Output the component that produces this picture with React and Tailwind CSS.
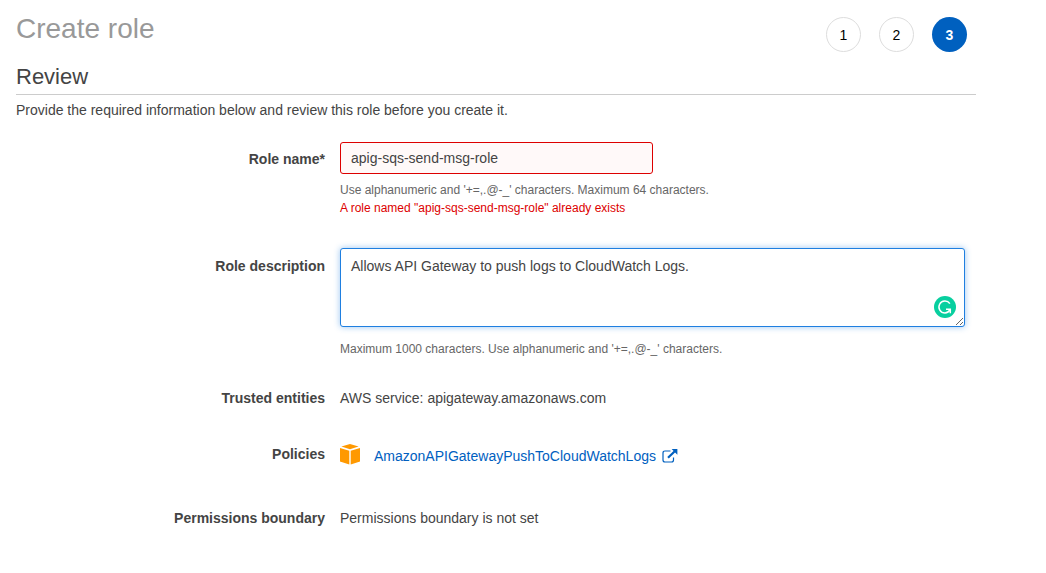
import React from "react";

const steps = [1, 2, 3];
const current = 3;

function Row({ label, htmlFor, labelClass = "", className = "", children }) {
  const text = "text-right text-sm leading-5 font-bold text-[#444444] " + labelClass;
  return (
    <div className={"grid grid-cols-[minmax(0,309fr)_minmax(0,636fr)] gap-[15px] " + className}>
      {htmlFor ? (
        <label htmlFor={htmlFor} className={text}>{label}</label>
      ) : (
        <div className={text}>{label}</div>
      )}
      <div className="min-w-0">{children}</div>
    </div>
  );
}

function PolicyIcon() {
  return (
    <svg aria-hidden="true" width="20" height="21" viewBox="0 0 20 21" fill="#ff9900" className="shrink-0">
      <path d="M10 0 L18.6 2.6 L10 5.2 L1.4 2.6 Z" />
      <path d="M0 4 L9.3 6.7 V20.4 L0 17.6 Z" />
      <path d="M20 4 L10.7 6.7 V20.4 L20 17.6 Z" />
    </svg>
  );
}

function ExternalIcon() {
  return (
    <svg aria-hidden="true" width="16" height="14" viewBox="0 0 16 14" fill="none" stroke="#0060bf" className="shrink-0">
      <path d="M8.5 2 H3 Q1 2 1 4 V11 Q1 13 3 13 H9.5 Q11.5 13 11.5 11 V8.4" strokeWidth="1.2" />
      <path d="M6 8.8 L12.8 2.2" strokeWidth="2.2" />
      <path d="M9.6 0 H15.4 V5.8 Z" fill="#0060bf" stroke="none" />
    </svg>
  );
}

function GrammarBadge() {
  return (
    <svg aria-hidden="true" width="22" height="22" viewBox="0 0 22 22" className="absolute right-[9px] bottom-[9px]">
      <circle cx="11" cy="11" r="11" fill="#08cf9f" />
      <path d="M15.9 7.6 A6 6 0 1 0 11 17 Q14.4 16.9 16 13.6" fill="none" stroke="#fff" strokeWidth="1.5" />
      <path d="M12 13.2 H16.3 V17.2" fill="none" stroke="#fff" strokeWidth="1.5" />
    </svg>
  );
}

export default function App() {
  return (
    <main className="min-h-screen bg-white font-['Liberation_Sans',Arial,sans-serif] text-[#444444]">
      <div className="max-w-[992px] px-4 pt-3 pb-8">
        <header className="flex items-start justify-between">
          <h1 className="text-[28px] leading-[34px] text-[#999999]">Create role</h1>
          <ol className="mt-[5px] mr-[9px] flex gap-[18px]">
            {steps.map((n) => (
              <li
                key={n}
                aria-current={n === current ? "step" : undefined}
                className={
                  "flex size-[35px] items-center justify-center rounded-full text-sm " +
                  (n === current ? "bg-[#0060bf] font-bold text-white" : "border border-[#dddddd] text-black")
                }
              >
                {n}
              </li>
            ))}
          </ol>
        </header>

        <h2 className="mt-3 border-b border-[#cccccc] pb-1 text-[22px] leading-[26px]">Review</h2>
        <p className="mt-[5px] text-sm leading-5">
          Provide the required information below and review this role before you create it.
        </p>

        <form className="mt-[22px]" onSubmit={(e) => e.preventDefault()}>
          <Row label="Role name*" htmlFor="role-name" labelClass="pt-[7px]">
            <input
              id="role-name"
              type="text"
              aria-invalid="true"
              aria-describedby="name-help name-error"
              defaultValue="apig-sqs-send-msg-role"
              className="block h-8 w-full max-w-[313px] rounded-[3px] border border-[#dd0000] bg-[#fff9f9] px-2.5 text-sm outline-none"
            />
            <p id="name-help" className="mt-[7px] text-xs leading-[18px] text-[#666666]">
              Use alphanumeric and '+=,.@-_' characters. Maximum 64 characters.
            </p>
            <p id="name-error" className="text-xs leading-[18px] text-[#dd0000]">
              A role named "apig-sqs-send-msg-role" already exists
            </p>
          </Row>

          <Row label="Role description" htmlFor="role-description" labelClass="pt-2" className="mt-[31px]">
            <div className="relative mr-[11px]">
              <textarea
                id="role-description"
                aria-describedby="description-help"
                defaultValue="Allows API Gateway to push logs to CloudWatch Logs."
                spellCheck={false}
                className="block h-[79px] w-full resize rounded-[3px] border border-[#1f7fe0] bg-white px-2.5 py-[7px] text-sm leading-5 shadow-[0_0_6px_rgba(31,127,224,0.45)] outline-none"
              />
              <GrammarBadge />
            </div>
            <p id="description-help" className="mt-[13px] text-xs leading-[18px] text-[#666666]">
              Maximum 1000 characters. Use alphanumeric and '+=,.@-_' characters.
            </p>
          </Row>

          <Row label="Trusted entities" className="mt-[30px]">
            <p className="text-sm leading-5">AWS service: apigateway.amazonaws.com</p>
          </Row>

          <Row label="Policies" className="mt-9">
            <div className="flex items-start">
              <PolicyIcon />
              <a href="#policy" className="ml-3.5 flex items-center gap-1.5 text-sm leading-6 text-[#0060bf]">
                AmazonAPIGatewayPushToCloudWatchLogs
                <ExternalIcon />
              </a>
            </div>
          </Row>

          <Row label="Permissions boundary" className="mt-10">
            <p className="text-sm leading-5">Permissions boundary is not set</p>
          </Row>
        </form>
      </div>
    </main>
  );
}
